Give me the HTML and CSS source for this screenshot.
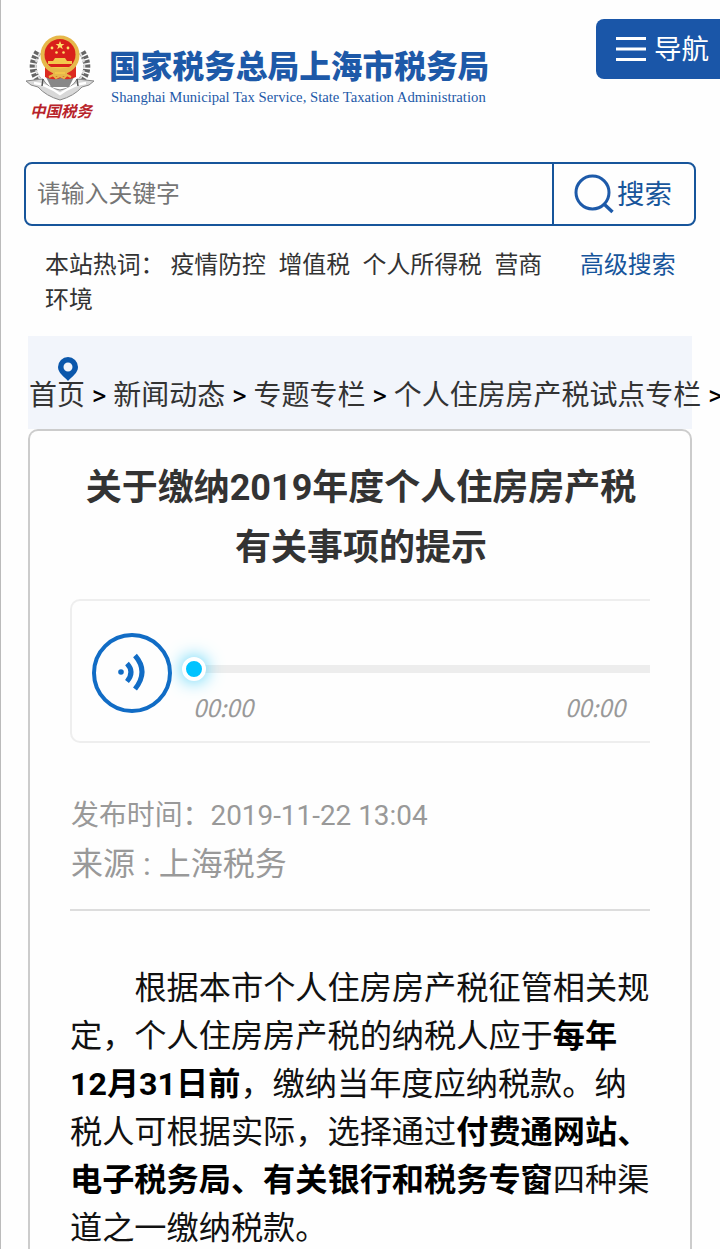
FILE: index.html
```html
<!DOCTYPE html>
<html lang="zh-CN">
  <head>
    <meta charset="utf-8">
    <meta name="viewport" content="width=device-width, initial-scale=1">
    <link rel="stylesheet" href="styles.css">
    <title>关于缴纳2019年度个人住房房产税有关事项的提示</title>
  </head>
  <body>
    <header class="header">
      <div class="logo">
        <div class="emblem">
          <svg width="72" height="70" viewBox="0 0 72 70">
            <path d="M14 19Q2 38 20 53M58 19Q70 38 52 53" fill="none" stroke="#666" stroke-width="7" stroke-dasharray="3 1.500"/>
            <path d="M16 20Q5 38 22 52M56 20Q67 38 50 52" fill="none" stroke="#ddd" stroke-width="2" stroke-dasharray="4 2"/>
            <path d="M22 44l5 10h18l5-10z" fill="#888"/>
            <path d="M21 32h31v12q-8 4-15 1q-8 3-16-1z" fill="#dc2a20"/>
            <circle cx="36" cy="22" r="19.500" fill="#e6b84a"/>
            <circle cx="36" cy="21.500" r="15.500" fill="#d91f1a"/>
            <path d="M36 8l1.200 3h3.200l-2.600 2 1 3.200-2.800-2-2.800 2 1-3.200-2.600-2h3.200z" fill="#ffdf69"/>
            <g fill="#ffdf69">
              <circle cx="28" cy="15" r="1.400"/>
              <circle cx="44" cy="15" r="1.400"/>
              <circle cx="32.500" cy="19.500" r="1.300"/>
              <circle cx="39.500" cy="19.500" r="1.300"/>
            </g>
            <path d="M31 25h10l2 3h5v3H24v-3h5z" fill="#f3c74c"/>
            <path d="M23 34q13 5 26 0M30 38h12v4H30z" fill="#f3c74c" stroke="#e6b84a" stroke-width="2"/>
            <path d="M25 44l4-2 3 3 4-2 4 2 3-3 4 2" fill="none" stroke="#e6b84a" stroke-width="2"/>
            <path d="M2 48l17-2q4 9 17 11q13-2 17-11l17 2-5 4-7 2q-8 9-22 13q-14-4-22-13l-7-2z" fill="#d8d8d8" stroke="#888" stroke-width="1"/>
            <path d="M10 50q12 1 26 11q14-10 26-11" fill="none" stroke="#fff" stroke-width="2.500"/>
            <path d="M19 46l-1 7M53 46l1 7" stroke="#555" stroke-width="1.500"/>
          </svg>
          <span class="emblem-name">中国税务</span>
        </div>
        <div class="logo-text">
          <div class="logo-cn">国家税务总局上海市税务局</div>
          <div class="logo-en">Shanghai Municipal Tax Service, State Taxation Administration</div>
        </div>
      </div>
      <button class="nav-button">
        <svg width="30" height="26" viewBox="0 0 30 26">
          <path d="M0 2.500h30M0 13h30M0 23.500h30" stroke="#fff" stroke-width="3"/>
        </svg>
        <span class="nav-label">导航</span>
      </button>
    </header>

    <div class="search">
      <input class="search-input" type="text" placeholder="请输入关键字">
      <button class="search-button">
        <svg width="40" height="40" viewBox="0 0 40 40" fill="none" stroke="#1d5aa9" stroke-width="3">
          <circle cx="18.500" cy="18.500" r="16.500"/>
          <path d="M30 30l8.500 8" stroke-width="3.500"/>
        </svg>
        <span class="search-label">搜索</span>
      </button>
    </div>

    <div class="hot">
      <div class="hot-words">本站热词： <a>疫情防控</a> <a>增值税</a> <a>个人所得税</a> <a>营商环境</a></div>
      <a class="advanced">高级搜索</a>
    </div>

    <nav class="crumbs">
      <svg class="pin" width="20" height="24" viewBox="0 0 20 24">
        <path fill-rule="evenodd" d="M10 0a10 10 0 0 1 10 10c0 6-6 9.500-10 14C6 19.500 0 16 0 10A10 10 0 0 1 10 0zm0 5.500a4.500 4.500 0 1 0 0 9 4.500 4.500 0 0 0 0-9z" fill="#0b57ab"/>
      </svg>
      <div class="crumb-list"><a>首页</a> &gt; <a>新闻动态</a> &gt; <a>专题专栏</a> &gt; <a>个人住房房产税试点专栏</a> &gt;</div>
    </nav>

    <main class="article">
      <h1 class="title">关于缴纳2019年度个人住房房产税有关事项的提示</h1>

      <div class="player">
        <svg class="play" width="80" height="80" viewBox="0 0 80 80" fill="none" stroke="#116cc5">
          <circle cx="40" cy="40" r="38" stroke-width="4"/>
          <circle cx="29" cy="39" r="2.800" fill="#116cc5" stroke="none"/>
          <path d="M35 30.500q8 8.500 0 18" stroke-width="5"/>
          <path d="M43 22.500q14 16 0 33.500" stroke-width="5"/>
        </svg>
        <div class="progress">
          <div class="track"><span class="knob"></span></div>
          <div class="times"><i>00:00</i><i>00:00</i></div>
        </div>
      </div>

      <div class="info">
        <p class="date">发布时间：2019-11-22 13:04</p>
        <p class="source">来源 : 上海税务</p>
      </div>

      <p class="content">根据本市个人住房房产税征管相关规定，个人住房房产税的纳税人应于<b>每年12月31日前</b>，缴纳当年度应纳税款。纳税人可根据实际，选择通过<b>付费通网站、电子税务局、有关银行和税务专窗</b>四种渠道之一缴纳税款。</p>
    </main>
  </body>
</html>
```
FILE: styles.css
```css
* {
  box-sizing: border-box;
}

body {
  margin: 0;
  height: 1249px;
  overflow: hidden;
  border-left: 1px solid #bbb;
  font-family: Roboto, "Noto Sans CJK SC", sans-serif;
  color: #333;
  background-color: #fefefe;
}

p {
  margin: 0;
}

button {
  font-family: inherit;
  cursor: pointer;
}

.header {
  display: flex;
  justify-content: space-between;
  align-items: flex-start;
  height: 162px;
  padding: 19px 0 0 23px;
}

.logo {
  display: flex;
  padding-top: 14px;
}

.emblem {
  display: flex;
  flex-direction: column;
  width: 72px;
}

.emblem-name {
  padding-left: 6px;
  font-size: 15.5px;
  line-height: 18px;
  font-weight: 700;
  font-style: italic;
  color: #b8232a;
}

.logo-text {
  padding: 15px 0 0 13px;
  color: #1d59a8;
  white-space: nowrap;
}

.logo-cn {
  font-size: 31.7px;
  line-height: 39px;
  font-weight: 900;
}

.logo-en {
  padding-left: 2px;
  font-family: "Liberation Serif", serif;
  font-size: 14.7px;
  line-height: 20px;
}

.nav-button {
  display: flex;
  align-items: center;
  gap: 8px;
  width: 124px;
  height: 60px;
  padding: 0 0 0 20px;
  border: none;
  border-radius: 8px 0 0 8px;
  font-size: 27.5px;
  white-space: nowrap;
  color: #fff;
  background-color: #1a56a8;
}

.nav-label {
  padding-bottom: 4px;
}

.search {
  display: flex;
  width: 672px;
  height: 64px;
  margin-left: 23px;
  border: 2px solid #17559b;
  border-radius: 8px;
}

.search-input {
  flex: 1;
  min-width: 0;
  padding: 0 0 1px 11px;
  border: none;
  font-family: inherit;
  font-size: 23.8px;
  background: none;
}

.search-input::placeholder {
  color: #757575;
}

.search-button {
  display: flex;
  align-items: center;
  gap: 3px;
  width: 142px;
  padding: 0 0 0 20px;
  border: none;
  border-left: 2px solid #17559b;
  font-size: 27.5px;
  color: #17559b;
  background: none;
}

.search-label {
  padding-bottom: 5px;
}

.hot {
  display: flex;
  height: 110px;
  padding: 22px 0 0 44px;
  font-size: 23.9px;
  line-height: 35px;
}

.hot-words {
  width: 508px;
  margin-right: 27px;
}

.hot-words a {
  margin-right: 6.5px;
}

.advanced {
  color: #17559b;
}

.crumbs {
  width: 664px;
  height: 93px;
  margin-left: 27px;
  padding: 21px 0 0 1px;
  background-color: #f2f5fb;
}

.pin {
  display: block;
  margin-left: 29px;
}

.crumb-list {
  margin-top: -5px;
  font-size: 27.95px;
  line-height: 40px;
  white-space: nowrap;
  color: #000;
}

.crumb-list a {
  color: #333;
}

.article {
  width: 664px;
  height: 820px;
  margin-left: 27px;
  padding: 27px 40px 0;
  border: 2px solid #ccc;
  border-bottom: none;
  border-radius: 10px 10px 0 0;
}

.title {
  margin: 0;
  padding-left: 2px;
  font-size: 36px;
  line-height: 60px;
  text-align: center;
}

.player {
  display: flex;
  height: 144px;
  margin-top: 21px;
  padding: 32px 0 0 20px;
  border: 2px solid #eee;
  border-right: none;
  border-radius: 10px 0 0 10px;
}

.progress {
  flex: 1;
  padding: 32px 0 0 22px;
}

.track {
  display: flex;
  align-items: center;
  height: 8px;
  background-color: #ededed;
}

.knob {
  width: 24px;
  height: 24px;
  margin-left: -12px;
  border: 4px solid #fff;
  border-radius: 50%;
  background-color: #00c3ff;
  box-shadow: 0 0 18px #3fcdf7;
}

.times {
  display: flex;
  justify-content: space-between;
  margin-left: -1px;
  padding: 17px 25px 0 0;
  font-family: "Noto Sans CJK SC", sans-serif;
  font-size: 24px;
  line-height: 34px;
  color: #999;
}

.info {
  height: 168px;
  padding: 49px 0 0 1px;
  border-bottom: 2px solid #ddd;
  color: #999;
}

.date {
  font-size: 27.9px;
  line-height: 48px;
}

.source {
  font-size: 32px;
  line-height: 48px;
}

.content {
  margin-top: 53px;
  font-size: 32.2px;
  line-height: 48px;
  text-indent: 2em;
  color: #111;
}

.content b {
  color: #000;
}
```
